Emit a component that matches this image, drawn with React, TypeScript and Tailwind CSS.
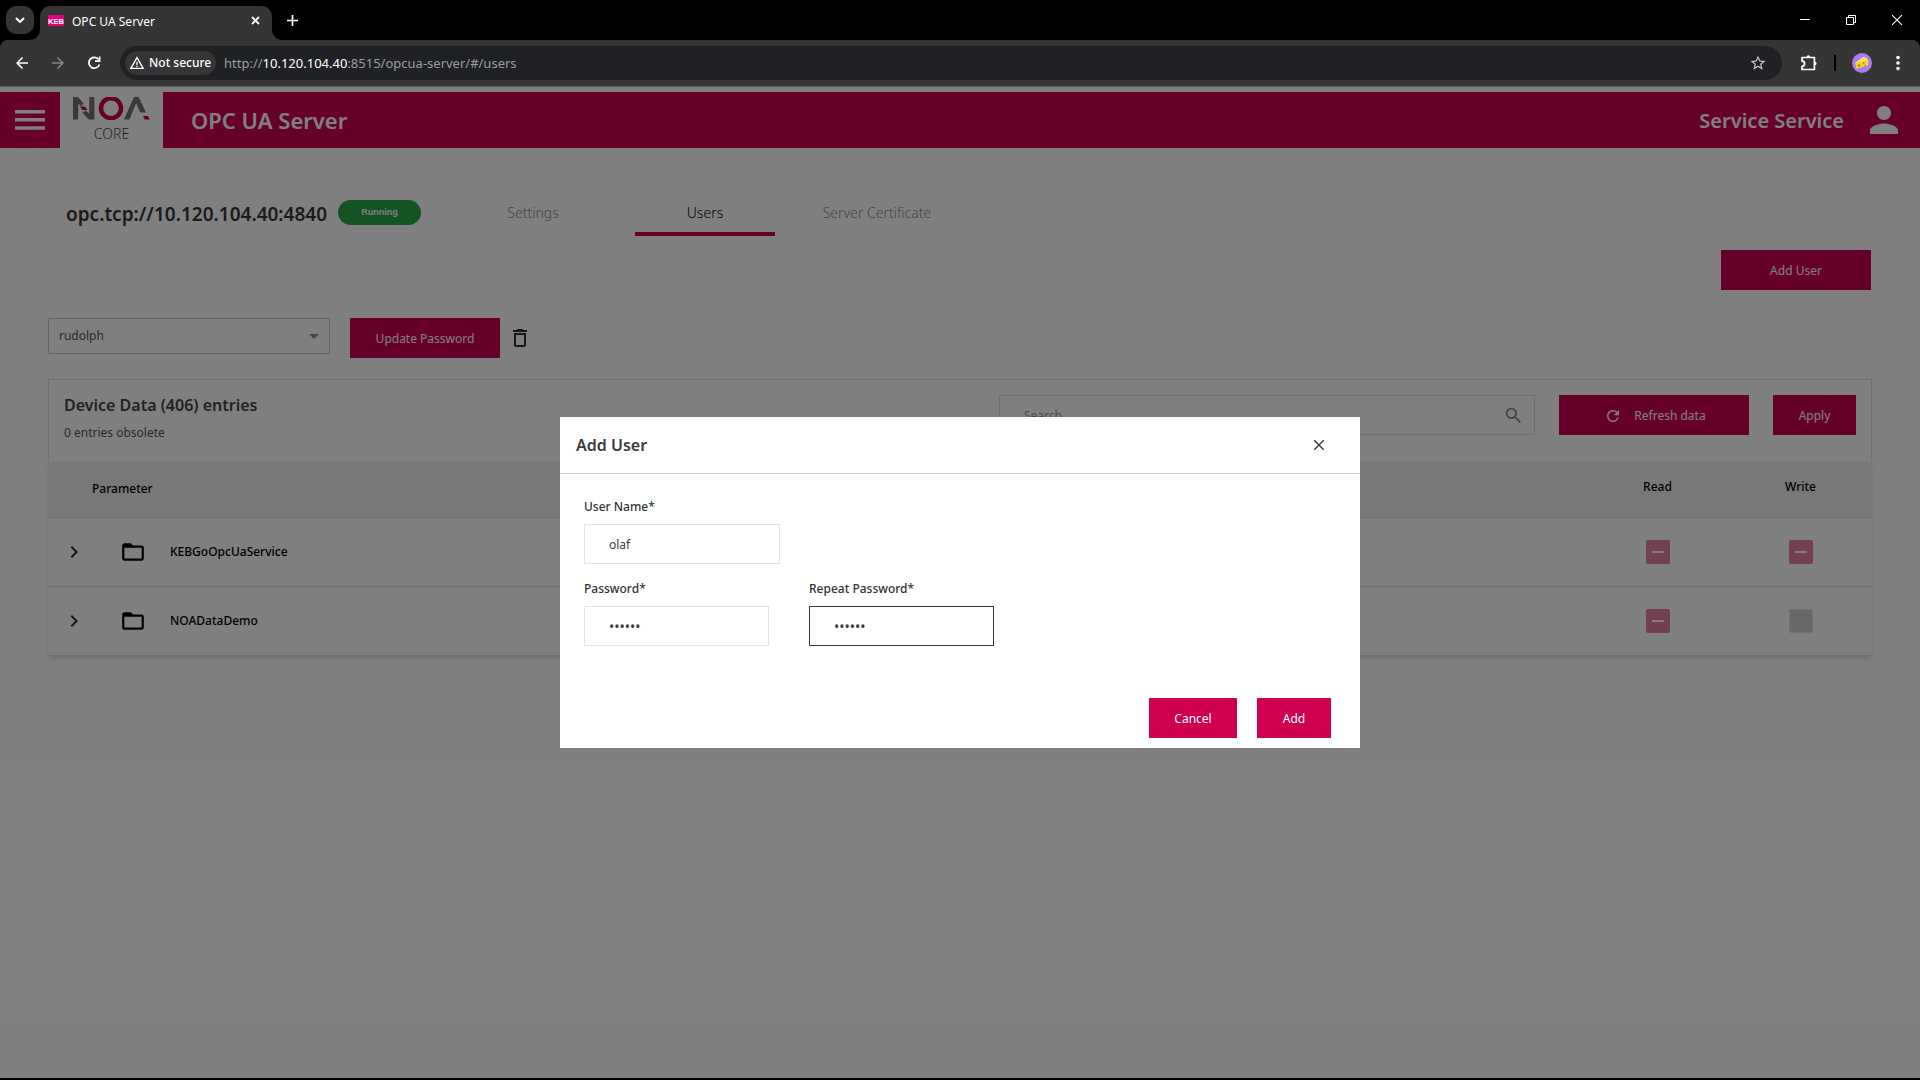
import type { ReactNode } from 'react'
import clsx from 'clsx'
import {
  MdArrowBack,
  MdArrowDropDown,
  MdArrowForward,
  MdChevronRight,
  MdDeleteOutline,
  MdFolderOpen,
  MdPerson,
  MdRefresh,
  MdSearch,
  MdStarBorder,
  MdWarningAmber,
} from 'react-icons/md'

type Access = 'partial' | 'none'

interface DeviceEntry {
  name: string
  read: Access
  write: Access
}

const entries: DeviceEntry[] = [
  { name: 'KEBGoOpcUaService', read: 'partial', write: 'partial' },
  { name: 'NOADataDemo', read: 'partial', write: 'none' },
]

const tabs = ['Settings', 'Users', 'Server Certificate']

interface ButtonProps {
  children: ReactNode
  className?: string
}

function Button({ children, className }: ButtonProps) {
  return (
    <button
      type="button"
      className={clsx('flex h-10 items-center justify-center bg-[#cf0050] pt-0.5 text-xs text-white', className)}
    >
      {children}
    </button>
  )
}

/* ---------- Browser window ---------- */

function TabStrip() {
  return (
    <div className="flex h-10 items-end bg-black pl-1.5 text-white">
      <button
        type="button"
        aria-label="Search tabs"
        className="mb-1.5 flex size-7 items-center justify-center rounded-[10px] bg-[#353535]"
      >
        <svg width="10" height="6" viewBox="0 0 10 6" fill="none" stroke="currentColor" strokeWidth="2">
          <path d="M1 1l4 4 4-4" />
        </svg>
      </button>
      <div className="flex h-[34px] items-end">
        <svg width="10" height="10" viewBox="0 0 10 10" fill="#353535" className="-ml-1">
          <path d="M10 0v10H0A10 10 0 0 0 10 0z" />
        </svg>
        <div className="flex h-[34px] w-[232px] items-center rounded-t-[10px] bg-[#353535] pr-3 pb-1.5 pl-2">
          <svg width="16" height="11" viewBox="0 0 16 11" className="mr-2">
            <rect width="16" height="11" fill="#e6007e" />
            <text
              x="8"
              y="8.5"
              textAnchor="middle"
              fontSize="7.5"
              fontWeight="700"
              fill="#fff"
              fontFamily="Liberation Sans, sans-serif"
            >
              KEB
            </text>
          </svg>
          <span className="flex-1 pt-1 text-xs">OPC UA Server</span>
          <button type="button" aria-label="Close tab">
            <svg width="9" height="9" viewBox="0 0 9 9" stroke="currentColor" strokeWidth="1.8">
              <path d="M1 1l7 7M8 1L1 8" />
            </svg>
          </button>
        </div>
        <svg width="10" height="10" viewBox="0 0 10 10" fill="#353535">
          <path d="M0 0v10h10A10 10 0 0 1 0 0z" />
        </svg>
      </div>
      <button type="button" aria-label="New tab" className="flex h-10 w-5 items-center justify-center">
        <svg width="11" height="11" viewBox="0 0 11 11" stroke="currentColor" strokeWidth="1.7">
          <path d="M5.5 0v11M0 5.5h11" />
        </svg>
      </button>
      <div className="ml-auto flex h-10 items-center">
        <button type="button" aria-label="Minimize" className="flex w-[46px] justify-center">
          <svg width="10" height="10" viewBox="0 0 10 10" fill="currentColor">
            <path d="M0 4h10v1H0z" />
          </svg>
        </button>
        <button type="button" aria-label="Restore" className="flex w-[46px] justify-center">
          <svg width="10" height="10" viewBox="0 0 10 10" fill="none" stroke="currentColor">
            <path d="M.5 2.5h7v7h-7zM2.5 2.5v-2h7v7h-2" />
          </svg>
        </button>
        <button type="button" aria-label="Close" className="flex w-[46px] justify-center">
          <svg width="10" height="10" viewBox="0 0 10 10" stroke="currentColor" strokeWidth="1.1">
            <path d="M0 0l10 10M10 0L0 10" />
          </svg>
        </button>
      </div>
    </div>
  )
}

function Toolbar() {
  return (
    <div className="bg-black">
      <div className="flex h-[46px] items-center rounded-t-lg bg-[#353535] pr-[13px] pl-3 text-white">
        <button type="button" aria-label="Back">
          <MdArrowBack className="size-5 p-px" />
        </button>
        <button type="button" aria-label="Forward" className="ml-4 text-[#868686]">
          <MdArrowForward className="size-5 p-px" />
        </button>
        <button type="button" aria-label="Reload" className="ml-4">
          <svg width="20" height="20" viewBox="0 0 20 20" fill="none" stroke="currentColor" strokeWidth="1.7">
            <path d="M14.6 6.5a5.4 5.4 0 1 0 .8 5" />
            <path d="M15.6 3.6v4.6H11" />
          </svg>
        </button>
        <div className="ml-4 flex h-[34px] flex-1 items-center rounded-full bg-[#202124] pr-[15px] pl-[5px]">
          <button
            type="button"
            className="flex h-6 w-[91px] items-center gap-1 rounded-full bg-[#353535] pl-1 text-xs font-medium"
          >
            <MdWarningAmber size={16} />
            Not secure
          </button>
          <span className="ml-2 flex-1 pt-0.5 text-[13px] text-[#9a9ea3]">
            http://<span className="text-white">10.120.104.40</span>:8515/opcua-server/#/users
          </span>
          <button type="button" aria-label="Bookmark this page" className="text-[#c7c7c7]">
            <MdStarBorder size={18} />
          </button>
        </div>
        <button type="button" aria-label="Extensions" className="ml-[17px]">
          <svg width="20" height="20" viewBox="0 0 20 20" fill="none" stroke="currentColor" strokeWidth="1.7">
            <path d="M3 4.5h12.4v12H3v-3.2a2.4 2.4 0 0 0 0-5.2z" strokeLinejoin="round" />
            <path d="M7.6 4a1.8 1.8 0 0 1 3.6 0zM15.8 8.7a1.8 1.8 0 0 1 0 3.6z" fill="currentColor" stroke="none" />
          </svg>
        </button>
        <div className="ml-[15px] h-4 w-0.5 bg-black" />
        <button type="button" aria-label="Profile" className="ml-4">
          <svg width="20" height="20" viewBox="0 0 20 20">
            <circle cx="10" cy="10" r="10" fill="#a97bf5" />
            <path d="M3.4 9.6L11.2 4c2.4.2 4.4 1.4 5.2 3.4L4 11z" fill="#ffe35a" />
            <path d="M3.4 9.8l13-2.4v5L4 16z" fill="#f8cf2c" />
            <circle cx="7" cy="12.4" r="1.2" fill="#b98512" />
            <circle cx="11.6" cy="10" r="1" fill="#b98512" />
            <circle cx="13" cy="12.6" r=".8" fill="#b98512" />
          </svg>
        </button>
        <button type="button" aria-label="Menu" className="ml-[17px]">
          <svg width="18" height="18" viewBox="0 0 18 18" fill="currentColor">
            <circle cx="9" cy="3.5" r="1.8" />
            <circle cx="9" cy="9" r="1.8" />
            <circle cx="9" cy="14.5" r="1.8" />
          </svg>
        </button>
      </div>
      <div className="h-px bg-[#5c5c5c]" />
    </div>
  )
}

/* ---------- OPC UA page ---------- */

function Logo() {
  return (
    <div className="flex w-[103px] flex-col items-center bg-white pt-[5px]">
      <svg width="77" height="23" viewBox="0 0 77 23">
        <path d="M0 0h5l5.6 6.6-2.6 2.6-2.8-2.8V22.4H0z" fill="#737373" />
        <path d="M16.2 0h5.2v22.4h-5.6l-6.4-6.6 3.2-2.4 3.6 3.4z" fill="#737373" />
        <path d="M7 9.6h5l2.4 3.4h-5z" fill="#cf0050" />
        <circle cx="38" cy="11.2" r="10" fill="none" stroke="#cf0050" strokeWidth="4.4" />
        <path d="M51 22.4L61 0h4.6L73 15.4h-5.6L63.2 6l-6.8 16.4z" fill="#737373" />
        <path d="M70 19h4.8l2 3.4h-5z" fill="#cf0050" />
      </svg>
      <span className="mt-1 text-sm leading-5 font-light text-[#444]">CORE</span>
    </div>
  )
}

function AppHeader() {
  return (
    <header className="flex h-14 bg-[#cf0050] text-white">
      <button type="button" aria-label="Open menu" className="flex w-[60px] items-center justify-center">
        <svg width="30" height="20" viewBox="0 0 30 20" fill="currentColor">
          <path d="M0 0h30v3.5H0zM0 8h30v3.5H0zM0 16.3h30v3.5H0z" />
        </svg>
      </button>
      <Logo />
      <h1 className="ml-7 self-center text-[22px] font-semibold">OPC UA Server</h1>
      <span className="ml-auto self-center pt-0.5 text-xl font-semibold">Service Service</span>
      <button type="button" aria-label="Account" className="mr-[15px] ml-[19px]">
        <MdPerson size={42} />
      </button>
    </header>
  )
}

function AccessBox({ access, label }: { access: Access; label: string }) {
  const partial = access === 'partial'
  return (
    <span className="mx-auto grid size-6 place-items-center">
      <input
        type="checkbox"
        aria-label={label}
        className={clsx(
          'col-start-1 row-start-1 size-6 appearance-none rounded-xs',
          partial ? 'bg-[#e780a7]' : 'border border-[#e2e2e2] bg-[#d0d0d0]',
        )}
      />
      {partial && <span className="pointer-events-none col-start-1 row-start-1 h-0.5 w-3 bg-white" />}
    </span>
  )
}

function DeviceTable() {
  return (
    <table className="w-full table-fixed border-collapse text-xs font-medium text-black shadow-md">
      <thead>
        <tr className="h-[55px] border-b border-[#dedede] bg-[#f0f0f0]">
          <th scope="col" className="pl-11 text-left font-medium">
            Parameter
          </th>
          <th scope="col" className="w-[143px] pb-1 font-medium">
            Read
          </th>
          <th scope="col" className="w-[143px] pb-1 font-medium">
            Write
          </th>
        </tr>
      </thead>
      <tbody>
        {entries.map((entry) => (
          <tr key={entry.name} className="h-[69px] border-b border-[#dedede]">
            <td>
              <div className="flex items-center pl-3.5">
                <button type="button" aria-label={`Expand ${entry.name}`} className="text-[#333]">
                  <MdChevronRight size={24} />
                </button>
                <MdFolderOpen size={26} className="ml-[34px]" aria-hidden />
                <span className="ml-6">{entry.name}</span>
              </div>
            </td>
            <td>
              <AccessBox access={entry.read} label={`Read ${entry.name}`} />
            </td>
            <td>
              <AccessBox access={entry.write} label={`Write ${entry.name}`} />
            </td>
          </tr>
        ))}
      </tbody>
    </table>
  )
}

function UsersPage() {
  return (
    <div className="px-12">
      <div className="mt-10 flex h-12 items-center pl-[18px]">
        <div className="flex w-[397px] items-center">
          <h2 className="w-[272px] pt-1 text-[19px] font-semibold text-[#373737]">opc.tcp://10.120.104.40:4840</h2>
          <span className="flex h-[25px] w-[83px] items-center justify-center rounded-full bg-[#28a745] pt-0.5 font-['Liberation_Sans',sans-serif] text-[9px] font-bold text-white">
            Running
          </span>
        </div>
        <nav className="flex gap-8">
          {tabs.map((tab) => (
            <button
              key={tab}
              type="button"
              className={clsx(
                'h-12 w-[140px] border-y-4 border-t-transparent pt-0.5 text-sm font-light',
                tab === 'Users' ? 'border-b-[#cf0050] text-black' : 'border-b-transparent text-[#8c8c8c]',
              )}
            >
              {tab}
            </button>
          ))}
        </nav>
      </div>

      <div className="mt-3.5 flex justify-end pr-px">
        <Button className="w-[150px]">Add User</Button>
      </div>

      <div className="mt-7 flex">
        <div className="flex h-9 w-[282px] items-center border border-[#c8c8c8] pr-[3px]">
          <select aria-label="User" className="h-full flex-1 appearance-none pl-2.5 text-xs text-[#555]">
            <option>rudolph</option>
          </select>
          <MdArrowDropDown size={24} className="pointer-events-none text-[#888]" aria-hidden />
        </div>
        <Button className="ml-5 w-[150px]">Update Password</Button>
        <button type="button" aria-label="Delete user" className="ml-2 text-[#333]">
          <MdDeleteOutline size={24} />
        </button>
      </div>

      <section className="mt-[21px]">
        <div className="flex h-[83px] border border-b-0 border-[#e2e2e2] px-[15px]">
          <div className="flex-1 pt-[13px]">
            <h3 className="text-base leading-6 font-semibold text-[#444]">Device Data (406) entries</h3>
            <p className="mt-1.5 text-xs leading-5 text-[#555]">0 entries obsolete</p>
          </div>
          <div className="flex items-start gap-6 pt-[15px]">
            <div className="flex h-10 w-[536px] items-center border border-[#dedede] pr-2.5">
              <input
                type="search"
                aria-label="Search"
                placeholder="Search"
                className="h-full flex-1 pl-6 text-xs placeholder:text-[#999]"
              />
              <MdSearch size={21} className="text-[#888]" aria-hidden />
            </div>
            <Button className="w-[190px] gap-3 pl-0.5">
              <MdRefresh size={18} />
              Refresh data
            </Button>
            <Button className="w-[83px]">Apply</Button>
          </div>
        </div>
        <DeviceTable />
      </section>
    </div>
  )
}

/* ---------- Add user dialog ---------- */

interface FieldProps {
  id: string
  label: string
  value: string
  type?: string
  active?: boolean
  className?: string
}

function Field({ id, label, value, type = 'text', active, className }: FieldProps) {
  return (
    <div className={clsx('flex flex-col', className)}>
      <label htmlFor={id} className="text-xs leading-5 font-medium text-[#333]">
        {label}
      </label>
      <input
        id={id}
        type={type}
        defaultValue={value}
        className={clsx(
          'mt-[7px] h-10 w-full border bg-white px-6 text-[#3c3c3c]',
          type === 'password' ? 'text-sm' : 'text-xs',
          active ? 'border-[#373737]' : 'border-[#e4e4e4]',
        )}
      />
    </div>
  )
}

function AddUserDialog() {
  return (
    <div className="absolute inset-0 flex items-center justify-center bg-black/50">
      <div role="dialog" aria-labelledby="add-user-title" className="w-[800px] bg-white">
        <div className="flex h-[57px] items-center justify-between border-b border-[#ccc] pr-9 pl-4">
          <h2 id="add-user-title" className="text-base font-semibold text-[#3c3c3c]">
            Add User
          </h2>
          <button type="button" aria-label="Close dialog" className="text-[#2c3e46]">
            <svg width="10" height="10" viewBox="0 0 10 10" stroke="currentColor" strokeWidth="1.4">
              <path d="M0 0l10 10M10 0L0 10" />
            </svg>
          </button>
        </div>
        <form className="px-6 pt-[23px]">
          <Field id="user-name" label="User Name*" value="olaf" className="w-[196px]" />
          <div className="mt-[15px] flex gap-10">
            <Field id="password" label="Password*" type="password" value="secret" className="w-[185px]" />
            <Field
              id="repeat-password"
              label="Repeat Password*"
              type="password"
              value="secret"
              active
              className="w-[185px]"
            />
          </div>
        </form>
        <div className="mt-[52px] flex justify-end gap-5 pr-[29px] pb-2.5">
          <Button className="w-[88px]">Cancel</Button>
          <Button className="w-[74px]">Add</Button>
        </div>
      </div>
    </div>
  )
}

export default function App() {
  return (
    <div className="flex min-h-screen flex-col bg-black pb-0.5 font-['Noto_Sans','Open_Sans',sans-serif]">
      <TabStrip />
      <Toolbar />
      <main className="relative flex-1 bg-white pt-[5px]">
        <AppHeader />
        <UsersPage />
        <AddUserDialog />
      </main>
    </div>
  )
}
